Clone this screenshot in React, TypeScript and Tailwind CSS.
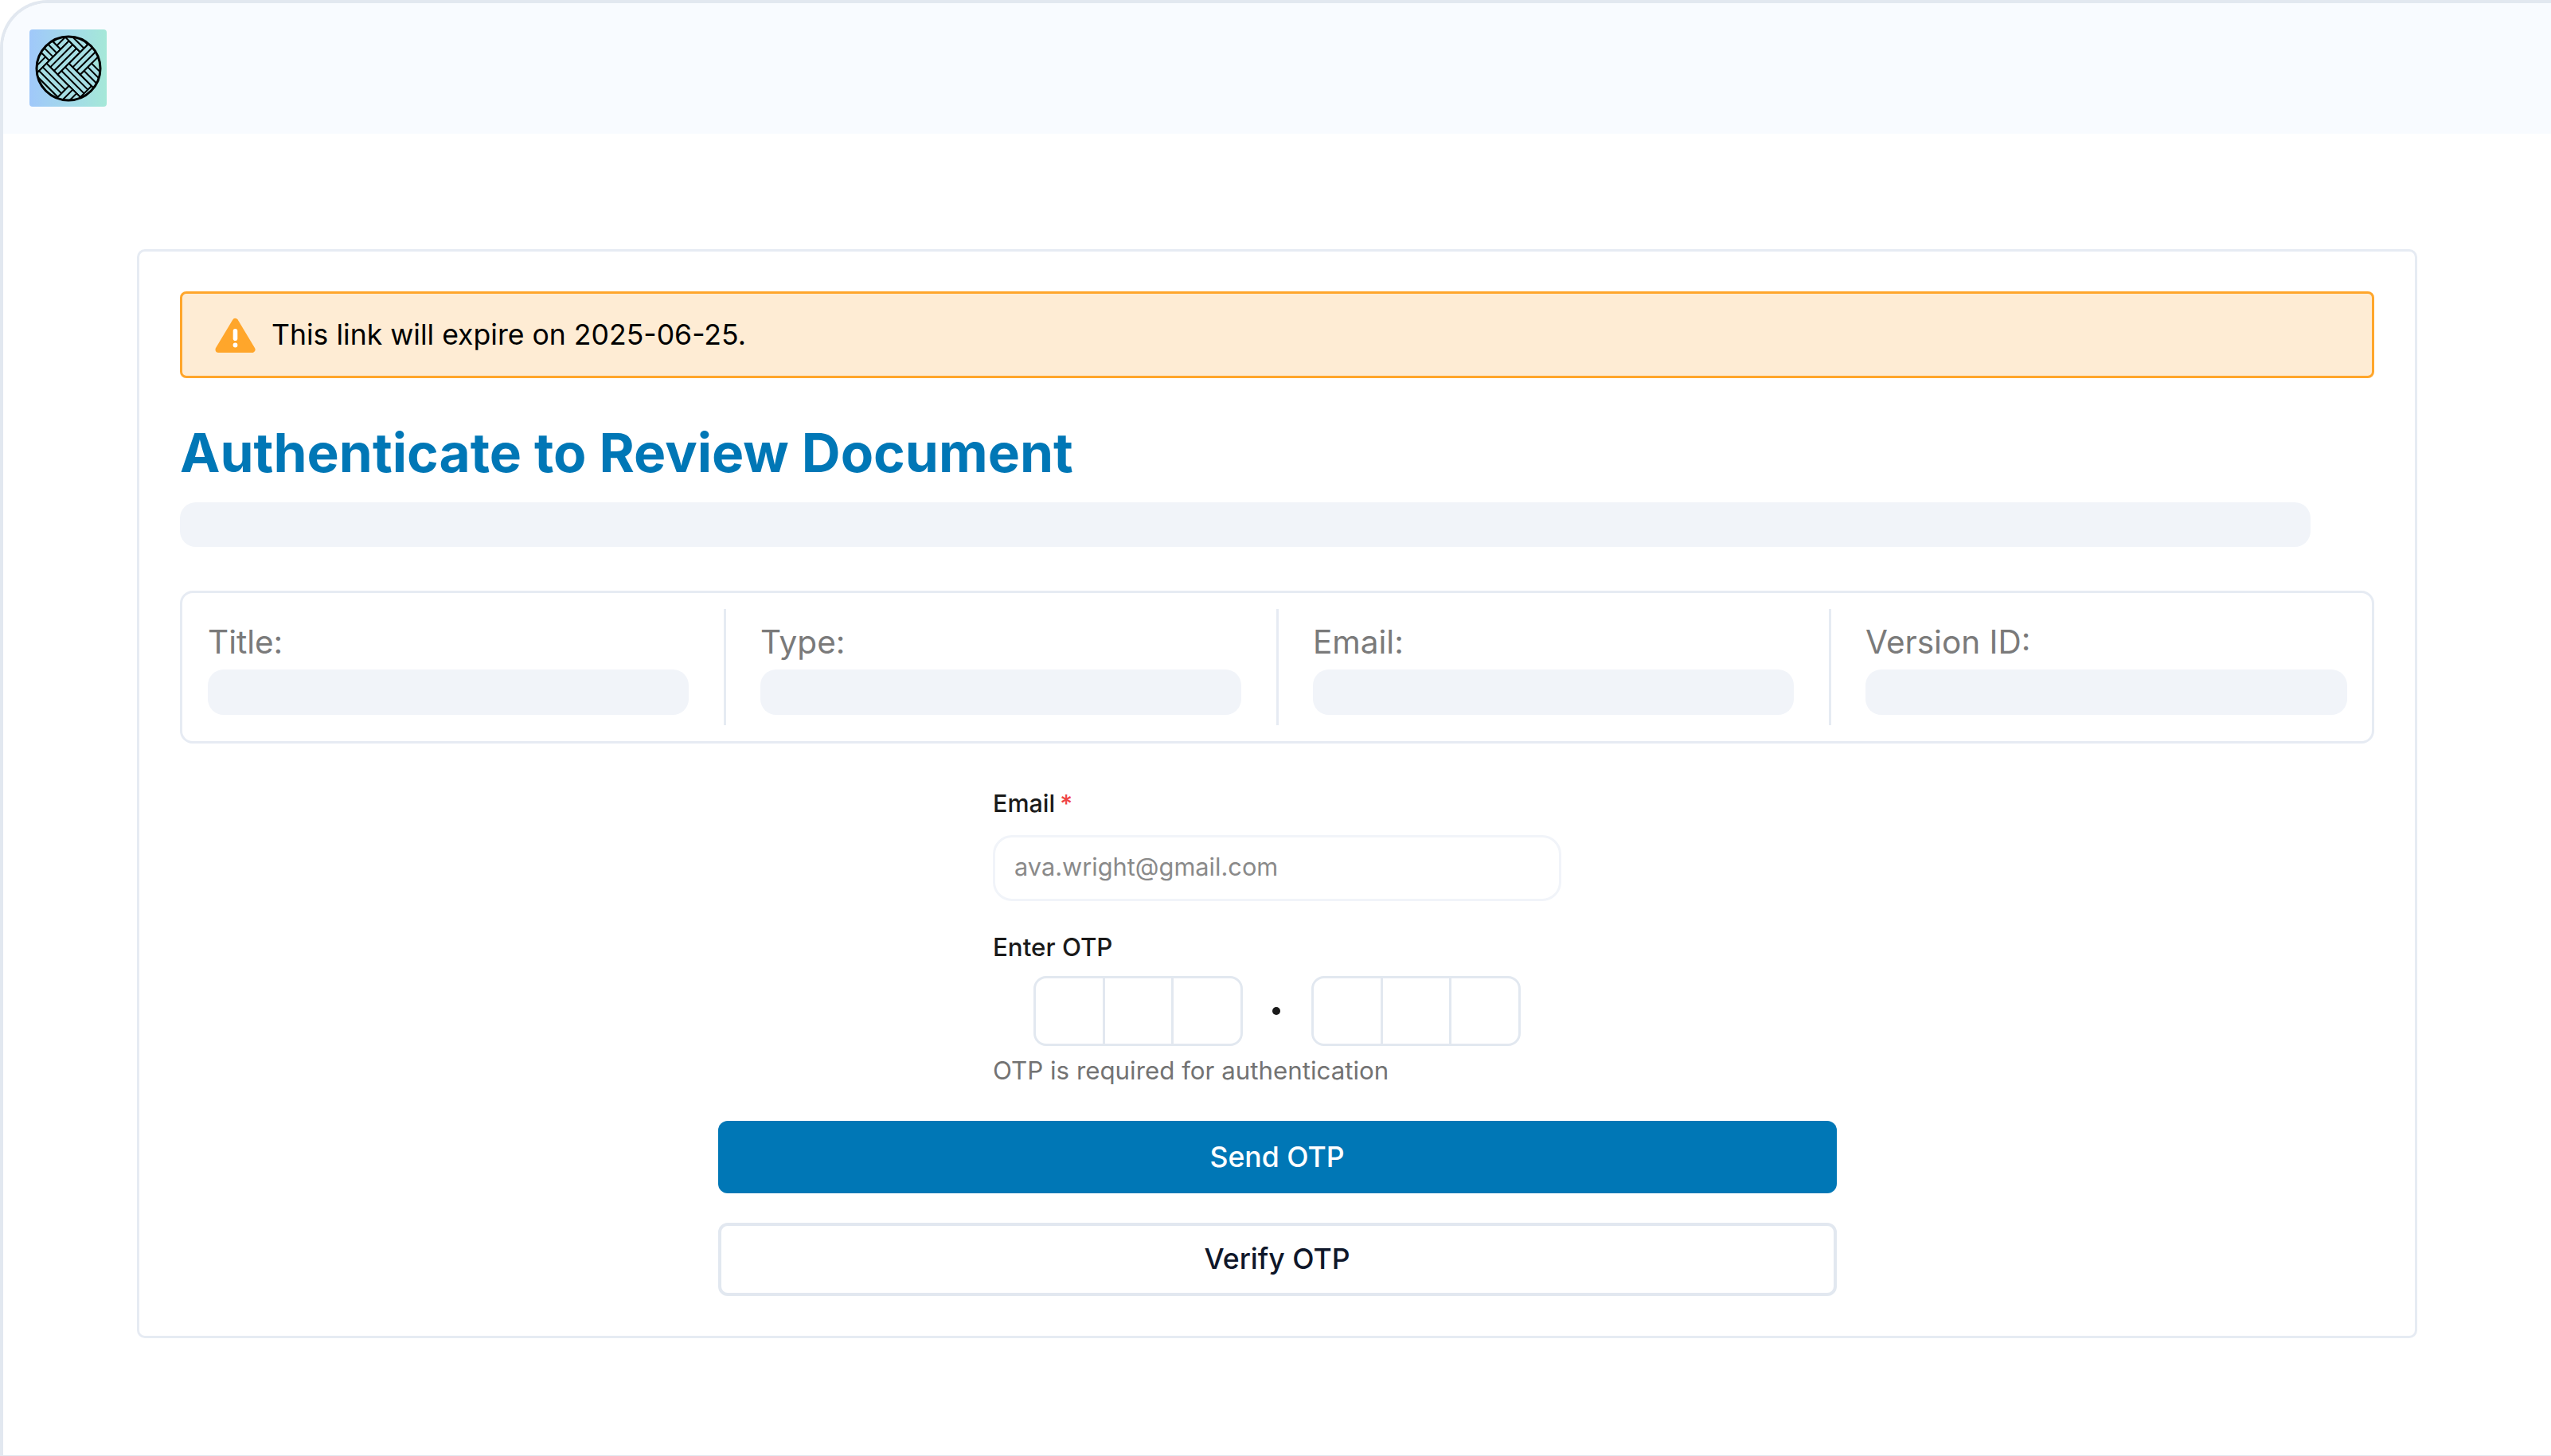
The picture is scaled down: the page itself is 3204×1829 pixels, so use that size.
import React from 'react'

const font = 'font-["Inter","Liberation_Sans",sans-serif]'

// parquet tiles of the logo in a grid turned by 45deg: [u0, u1, v0, v1, runs along u]
const tiles: [number, number, number, number, boolean][] = [
  [10, 50, -44, -24, true],
  [-50, -10, -44, -24, true],
  [-10, 10, -64, -24, false],
  [-15, 25, -24, -4, true],
  [25, 45, -34, -4, false],
  [-35, -15, -24, 16, false],
  [-55, -35, -24, 16, false],
  [-15, 5, -4, 36, false],
  [5, 45, -4, 16, true],
  [-55, -15, 16, 36, true],
  [5, 25, 16, 56, false],
]

function Logo() {
  return (
    <div className="flex h-[97px] w-[97px] items-center justify-center rounded-[4px] bg-gradient-to-r from-[#a0c8fa] to-[#a5e8d8]">
      <svg width="84" height="84" viewBox="-42 -42 84 84">
        <defs>
          <clipPath id="logo-clip"><circle r="40" /></clipPath>
        </defs>
        <g clipPath="url(#logo-clip)">
          <g transform="matrix(.7071 -.7071 .7071 .7071 0 0)" stroke="#000" strokeWidth="2" fill="#a6dee4">
            {tiles.map(([u0, u1, v0, v1, along], i) => {
              const w = u1 - u0
              const h = v1 - v0
              return (
                <g key={i}>
                  <rect x={u0} y={v0} width={w} height={h} />
                  {[1 / 3, 2 / 3].map((f) =>
                    along
                      ? <line key={f} x1={u0} x2={u1} y1={v0 + h * f} y2={v0 + h * f} />
                      : <line key={f} x1={u0 + w * f} x2={u0 + w * f} y1={v0} y2={v1} />
                  )}
                </g>
              )
            })}
          </g>
        </g>
        <circle r="40" fill="none" stroke="#000" strokeWidth="3" />
      </svg>
    </div>
  )
}

function WarningIcon() {
  return (
    <svg width="51" height="44" viewBox="0 0 51 44" className="shrink-0">
      <path d="M25.5 5 L46.5 40 H4.5 Z" fill="#ffa62b" stroke="#ffa62b" strokeWidth="8" strokeLinejoin="round" />
      <rect x="22.7" y="14" width="5.6" height="15" rx="2.8" fill="#fff" />
      <circle cx="25.5" cy="34.5" r="2.9" fill="#fff" />
    </svg>
  )
}

function MetaCell({ label, last }: { label: string; last?: boolean }) {
  return (
    <div className={last ? 'w-[605px]' : 'w-[651px] border-r-[3px] border-[#e6ebf3] pr-[44px]'}>
      <div className="mt-[20px] text-[40.5px] leading-[44px] text-[#7a7a7a]">{label}</div>
      <div className="mt-[12px] h-[57px] rounded-[20px] bg-[#f1f4f9]" />
    </div>
  )
}

function OtpGroup() {
  return (
    <div className="flex h-[88px] w-[263px] rounded-[16px] border-[3px] border-[#e2e8f0]">
      <div className="flex-1 border-r-[3px] border-[#e2e8f0]" />
      <div className="flex-1 border-r-[3px] border-[#e2e8f0]" />
      <div className="flex-1" />
    </div>
  )
}

export default function App() {
  return (
    <div className={`${font} h-screen overflow-hidden bg-white`}>
      <div className="h-full overflow-hidden rounded-tl-[60px] border-t-4 border-b border-l-4 border-[#e2e8f0]">
        <header className="h-[164px] bg-[#f8fbff] pt-[33px] pl-[33px]">
          <Logo />
        </header>
        <main className="mt-[145px] ml-[168px] h-[1368px] w-[2864px] rounded-[10px] border-[3px] border-[#e6ebf3] px-[51px] pt-[50px]">
          <div className="flex h-[109px] items-center gap-[20px] rounded-[8px] border-[3px] border-[#ffa62b] bg-[#feecd4] pl-[41px] text-[35.6px] text-black">
            <WarningIcon />
            <span>This link will expire on 2025-06-25.</span>
          </div>
          <h1 className="mt-[54px] text-[67.6px] leading-[80px] font-bold text-[#0077b6]">Authenticate to Review Document</h1>
          <div className="mt-[22px] h-[56px] w-[2676px] rounded-[20px] bg-[#f1f4f9]" />
          <div className="mt-[55px] flex h-[192px] items-center rounded-[16px] border-[3px] border-[#e6ebf3] pl-[32px]">
            <div className="flex h-[146px] gap-[43px]">
              <MetaCell label="Title:" />
              <MetaCell label="Type:" />
              <MetaCell label="Email:" />
              <MetaCell label="Version ID:" last />
            </div>
          </div>
          <div className="mx-auto mt-[55px] w-[714px]">
            <div className="text-[30.5px] leading-[40px] font-medium text-[#1a1a1a]">Email<span className="ml-[6px] text-[#ef4444]">*</span></div>
            <div className="mt-[20px] flex h-[83px] items-center rounded-[24px] border-[3px] border-[#f1f4f9] pb-[3px] pl-[24px] text-[30.75px] text-[#8a8a8a]">ava.wright@gmail.com</div>
            <div className="mt-[38px] text-[31.3px] leading-[40px] font-medium text-[#1a1a1a]">Enter OTP</div>
            <div className="relative mt-[16px] flex items-center justify-center gap-[86px]">
              <OtpGroup />
              <OtpGroup />
              <span className="absolute left-[351px] h-[10px] w-[10px] rounded-full bg-[#1a1a1a]" />
            </div>
            <div className="mt-[11px] text-[31.3px] leading-[40px] text-[#737373]">OTP is required for authentication</div>
          </div>
          <div className="mx-auto mt-[43px] flex w-[1405px] flex-col gap-[37px] text-[35.6px]">
            <button className="h-[91px] rounded-[12px] bg-[#0077b6] font-medium text-white">Send OTP</button>
            <button className="h-[92px] rounded-[12px] border-4 border-[#e2e8f0] bg-white font-medium text-[#0f172a]">Verify OTP</button>
          </div>
        </main>
      </div>
    </div>
  )
}
